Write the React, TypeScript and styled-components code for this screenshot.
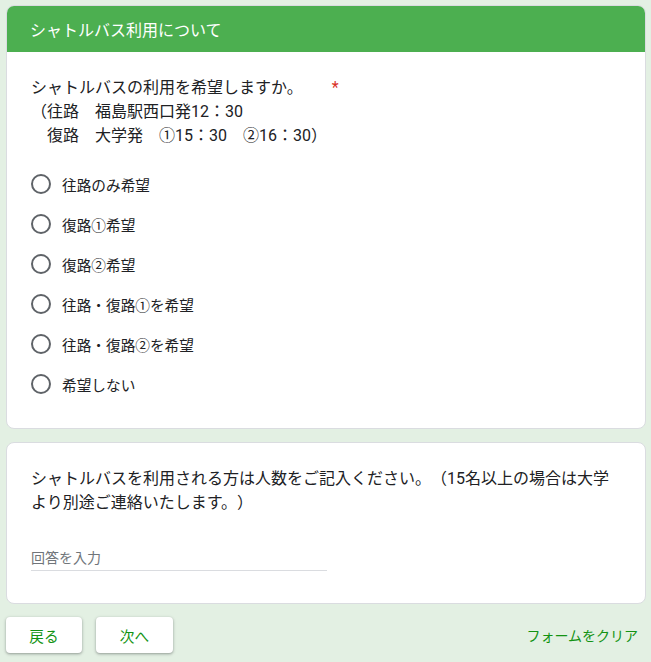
import React from "react";
import styled, { createGlobalStyle } from "styled-components";

const Global = createGlobalStyle`
  html, body { margin: 0; padding: 0; background: #e3f0e3; }
  body {
    font-family: Roboto, Arial, "Noto Sans CJK JP", sans-serif;
    color: #202124;
    text-spacing-trim: space-all;
    font-feature-settings: normal;
  }
`;

const Page = styled.div`
  width: 640px;
  padding: 5px 0 10px 6px;
  display: flex;
  flex-direction: column;
  gap: 13px;
`;

const Card = styled.div`
  background: #fff;
  border: 1px solid #dadce0;
  border-radius: 8px;
  overflow: hidden;
`;

const Header = styled.div`
  background: #4caf50;
  color: #fff;
  height: 47px;
  display: flex;
  align-items: center;
  padding: 0 24px;
  font-size: 16px;
  margin: -1px -1px 0;
`;

const Body = styled.div<{ $bottom?: number }>`
  padding: 24px 24px ${(p) => p.$bottom ?? 24}px;
`;

const Question = styled.div`
  font-size: 16px;
  line-height: 24px;
  letter-spacing: 0;
  white-space: pre;
`;

const Star = styled.span`
  color: #d93025;
  padding-left: 29px;
`;

const Options = styled.div`
  display: flex;
  flex-direction: column;
  margin-top: 16px;
`;

const Option = styled.label`
  display: flex;
  align-items: center;
  height: 40px;
  font-size: 14.67px;
  gap: 11px;
`;

const Radio = styled.span`
  width: 20px;
  height: 20px;
  box-sizing: border-box;
  border: 2px solid #5f6368;
  border-radius: 50%;
  flex: none;
`;

const Input = styled.div`
  margin-top: 28px;
  width: 296px;
  height: 27px;
  border-bottom: 1px solid #dadce0;
  font-size: 14px;
  color: #70757a;
  display: flex;
  align-items: center;
`;

const Footer = styled.div`
  display: flex;
  align-items: center;
  gap: 14px;
`;

const Button = styled.button<{ $w: number }>`
  width: ${(p) => p.$w}px;
  height: 36px;
  background: #fff;
  border: none;
  border-radius: 4px;
  box-shadow: 0 1px 2px rgba(60, 64, 67, 0.3), 0 1px 3px 1px rgba(60, 64, 67, 0.15);
  color: #139313;
  font-family: inherit;
  font-size: 14.67px;
  padding: 0;
`;

const Clear = styled.span`
  margin-left: auto;
  margin-right: 8px;
  color: #139313;
  font-size: 14px;
`;

const options = [
  "往路のみ希望",
  "復路①希望",
  "復路②希望",
  "往路・復路①を希望",
  "往路・復路②を希望",
  "希望しない",
];

export default function App() {
  return (
    <>
      <Global />
      <Page>
        <Card>
          <Header>シャトルバス利用について</Header>
          <Body>
            <Question>
              シャトルバスの利用を希望しますか。<Star>*</Star>
              {"\n（往路　福島駅西口発12：30\n　復路　大学発　①15：30　②16：30）"}
            </Question>
            <Options>
              {options.map((o) => (
                <Option key={o}>
                  <Radio />
                  {o}
                </Option>
              ))}
            </Options>
          </Body>
        </Card>
        <Card>
          <Body $bottom={32}>
            <Question>
              {"シャトルバスを利用される方は人数をご記入ください。（15名以上の場合は大学\nより別途ご連絡いたします。）"}
            </Question>
            <Input>回答を入力</Input>
          </Body>
        </Card>
        <Footer>
          <Button $w={76}>戻る</Button>
          <Button $w={77}>次へ</Button>
          <Clear>フォームをクリア</Clear>
        </Footer>
      </Page>
    </>
  );
}
